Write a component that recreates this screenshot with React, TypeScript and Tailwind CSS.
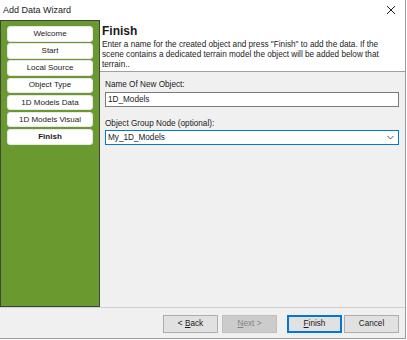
import React from "react";

const steps = [
  "Welcome",
  "Start",
  "Local Source",
  "Object Type",
  "1D Models Data",
  "1D Models Visual",
  "Finish",
];

export default function App() {
  return (
    <div className="w-[407px] h-[340px] bg-white font-['Liberation_Sans',Arial,sans-serif] text-[#1a1a1a] overflow-hidden">
      <div className="w-[406px] h-[339px] border-r border-b border-[#9c9c9c] flex flex-col bg-[#f0f0f0]">
        {/* title bar */}
        <div className="h-[20px] bg-white flex items-center justify-between pl-[3px] pr-[9px] shrink-0">
          <span className="text-[9px] leading-[10px]">Add Data Wizard</span>
          <svg width="10" height="10" viewBox="0 0 10 10">
            <path d="M1 1 L9 9 M9 1 L1 9" stroke="#222" strokeWidth="1" />
          </svg>
        </div>

        {/* main area */}
        <div className="flex flex-1 min-h-0">
          <div className="w-[100px] border border-[#3d4736] bg-[#6a9a2f] flex flex-col gap-[1.7px] pt-[5px] pl-[6px] pr-[6px] shrink-0">
            {steps.map((s) => (
              <div
                key={s}
                className={
                  "h-[15.5px] bg-white rounded-[3px] border border-[#e8e8e8] flex items-center justify-center text-[8px] leading-[10px] " +
                  (s === "Finish" ? "font-bold" : "")
                }
              >
                {s}
              </div>
            ))}
          </div>

          <div className="flex-1 flex flex-col">
            <div className="h-[52px] bg-white border-b border-[#a0a0a0] px-[2px] pt-[4px] shrink-0">
              <div className="text-[12px] leading-[14px] font-bold">Finish</div>
              <p className="mt-[2px] text-[8.2px] leading-[10px] pr-[16px]">
                Enter a name for the created object and press "Finish" to add the data. If the
                scene contains a dedicated terrain model the object will be added below that
                terrain..
              </p>
            </div>

            <div className="pt-[8px] pl-[5px] pr-[6px] flex flex-col text-[8.2px] leading-[10px]">
              <label>Name Of New Object:</label>
              <div className="mt-[2px] h-[15px] bg-white border border-[#7a7a7a] flex items-center px-[2px]">
                1D_Models
              </div>
              <label className="mt-[12px]">Object Group Node (optional):</label>
              <div className="mt-[1px] h-[15px] bg-white border border-[#0078d7] flex items-center justify-between px-[2px]">
                <span>My_1D_Models</span>
                <svg width="7" height="5" viewBox="0 0 7 5" className="mr-[2px]">
                  <path d="M0.5 1 L3.5 4 L6.5 1" stroke="#555" strokeWidth="1" fill="none" />
                </svg>
              </div>
            </div>
          </div>
        </div>

        {/* bottom bar */}
        <div className="h-[31px] border-t border-[#d0d0d0] flex justify-end items-start pt-[7px] pr-[6px] gap-[4px] shrink-0 text-[8.2px] leading-[10px]">
          <button className="w-[55px] h-[18px] bg-[#e1e1e1] border border-[#adadad]">
            &lt; <span className="underline">B</span>ack
          </button>
          <button className="w-[55px] h-[18px] bg-[#cccccc] border border-[#bfbfbf] text-[#838383]">
            <span className="underline">N</span>ext &gt;
          </button>
          <button className="ml-[6px] w-[55px] h-[18px] bg-[#e1e1e1] border-2 border-[#0078d7]">
            <span className="underline">F</span>inish
          </button>
          <button className="ml-[-2px] w-[55px] h-[18px] bg-[#e1e1e1] border border-[#adadad]">
            Cancel
          </button>
        </div>
      </div>
    </div>
  );
}
